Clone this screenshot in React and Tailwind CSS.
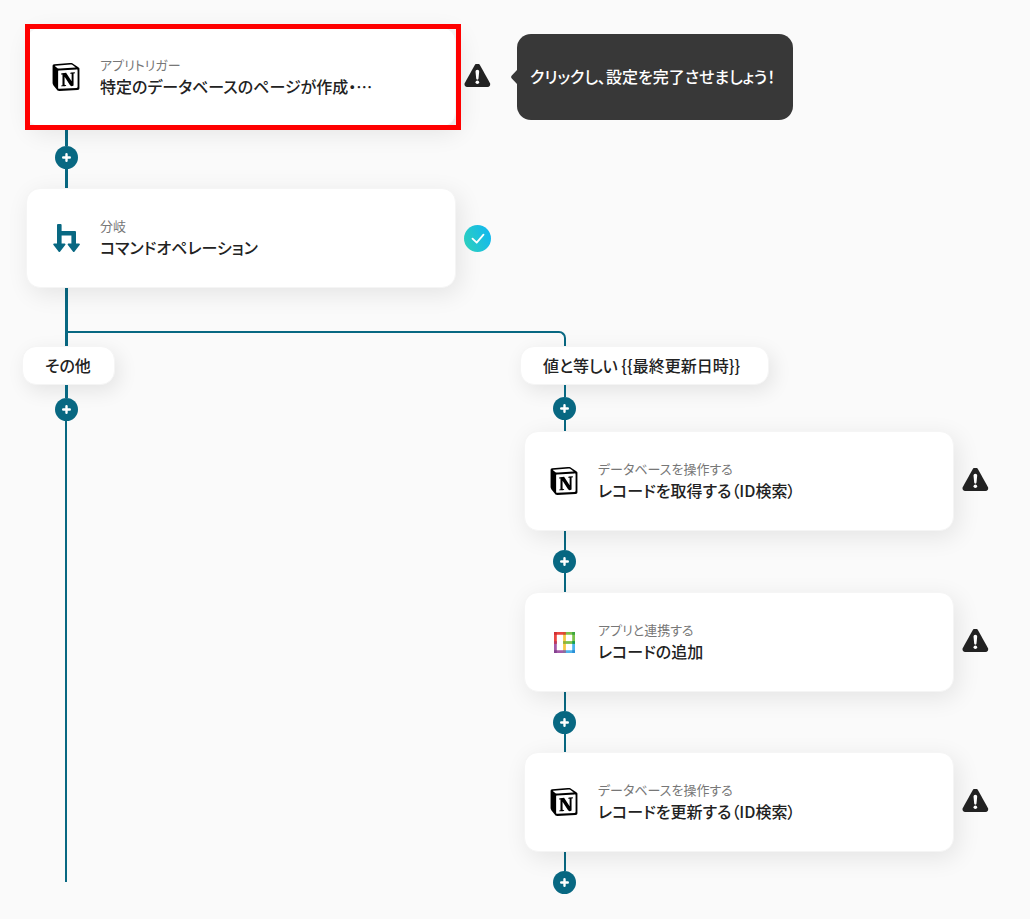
import React from "react";
import { SiNotion } from "react-icons/si";

function WarningIcon() {
  return (
    <svg width="27" height="27" viewBox="0 1 27 27" role="img" aria-label="未設定" className="shrink-0">
      <path
        d="M10.8 1.9a3 3 0 0 1 5.1 0l10 18.2a2.7 2.7 0 0 1-2.4 3.9H3.2a2.7 2.7 0 0 1-2.4-3.9z"
        fill="#222222"
      />
      <path d="M11.5 8.6a1.85 1.85 0 0 1 3.7 0l-.7 7a1.15 1.15 0 0 1-2.3 0z" fill="#fff" />
      <circle cx="13.35" cy="19.3" r="1.8" fill="#fff" />
    </svg>
  );
}

function DoneIcon() {
  return (
    <svg width="27" height="27" viewBox="0 0 27 27" role="img" aria-label="設定済み" className="shrink-0">
      <defs>
        <linearGradient id="done" x1="0" y1="0.75" x2="1" y2="0.35">
          <stop offset="0" stopColor="#2dd0bd" />
          <stop offset="1" stopColor="#12b8ee" />
        </linearGradient>
      </defs>
      <circle cx="13.5" cy="13.5" r="13.5" fill="url(#done)" />
      <path d="M8.5 13.6l4.2 4.1 6.8-8" fill="none" stroke="#fff" strokeWidth="1.8" strokeLinecap="round" strokeLinejoin="round" />
    </svg>
  );
}

function BranchIcon() {
  return (
    <svg width="27" height="28" viewBox="0 0 27 28" fill="#086882" aria-hidden="true">
      <path d="M4 1a1 1 0 0 1 1-1h2.6a1 1 0 0 1 1 1v6H22a1 1 0 0 1 1 1v12h-4.6v-8.6H8.6V20H4z" />
      <path d="M1 19.6h10.6a.8.8 0 0 1 .6 1.4l-5 6.4a1.1 1.1 0 0 1-1.7 0l-5-6.4a.8.8 0 0 1 .5-1.4z" />
      <path d="M15.4 19.6H26a.8.8 0 0 1 .6 1.4l-5 6.4a1.1 1.1 0 0 1-1.7 0l-5-6.4a.8.8 0 0 1 .5-1.4z" />
    </svg>
  );
}

function GridIcon() {
  return (
    <svg width="21" height="21" viewBox="0 0 21 21" aria-hidden="true">
      <g fill="none" strokeWidth="2.8">
        <path d="M1.4 11V1.4H11" stroke="#ea4640" />
        <path d="M10.5 1.4h9.1v9.1" stroke="#7dc24b" />
        <path d="M1.4 10.5v9.1h9.1" stroke="#a45aa8" />
        <path d="M10.5 19.6h9.1v-9.1" stroke="#4db4ec" />
        <path d="M10.5 2.6v15.8" stroke="#f6c944" />
        <path d="M11.8 10.5h6.6" stroke="#7dc24b" />
      </g>
      <path d="M0 0h2.8v2.8H0z" fill="#cf2f34" />
      <path d="M9.1 0h2.8v2.8H9.1z" fill="#d5512c" />
      <path d="M18.2 0H21v2.8h-2.8z" fill="#3aa63f" />
      <path d="M0 9.1h2.8v2.8H0z" fill="#c03a5c" />
      <path d="M9.1 9.1h2.8v2.8H9.1z" fill="#8fb035" />
      <path d="M18.2 9.1H21v2.8h-2.8z" fill="#15a04d" />
      <path d="M0 18.2h2.8V21H0z" fill="#84408f" />
      <path d="M9.1 18.2h2.8V21H9.1z" fill="#8a6f9c" />
      <path d="M18.2 18.2H21V21h-2.8z" fill="#2b8fd6" />
    </svg>
  );
}

const icons = {
  notion: <SiNotion size={28} color="#000" aria-hidden="true" />,
  branch: <BranchIcon />,
  grid: <GridIcon />,
};

function Step({ icon, kind, title, done, highlighted, hint }) {
  return (
    <div className="ml-1 flex items-center">
      <div className="relative">
        <button
          type="button"
          className="flex h-[100px] w-[430px] items-center rounded-[14px] border border-[#f5f5f5] bg-white pl-[25px] text-left shadow-[4px_6px_24px_rgba(0,0,0,0.09)]"
        >
          <span className="mr-5 flex w-7 items-center justify-center">{icons[icon]}</span>
          <span className="flex flex-col pb-0.5">
            <span className="text-[13px] leading-5 font-normal text-[#777777]">{kind}</span>
            <span className="text-[16px] leading-[22px] font-medium text-[#222222]">{title}</span>
          </span>
        </button>
        {highlighted && (
          <div className="pointer-events-none absolute -top-[3px] -right-[5px] -bottom-[3px] -left-px border-[5px] border-[#ff0000]" />
        )}
      </div>
      <div className="relative ml-2">{done ? <DoneIcon /> : <WarningIcon />}</div>
      {hint && (
        <div role="tooltip" className="ml-5 flex items-center">
          <svg width="6" height="14" viewBox="0 0 6 14" aria-hidden="true">
            <path d="M6 0v14L.8 8.4a2 2 0 0 1 0-2.8z" fill="#383838" />
          </svg>
          <p className="flex h-[86px] w-[276px] items-center rounded-[14px] bg-[#383838] px-[13px] pb-0.5 text-[16px] font-medium whitespace-nowrap text-white">
            {hint}
          </p>
        </div>
      )}
    </div>
  );
}

function AddButton() {
  return (
    <button
      type="button"
      aria-label="ステップを追加"
      className="ml-[33px] flex size-[23px] items-center justify-center rounded-full bg-[#086882]"
    >
      <svg width="9" height="9" viewBox="0 0 9 9" aria-hidden="true">
        <path d="M4.5 1.2v6.6M1.2 4.5h6.6" stroke="#fff" strokeWidth="2.4" strokeLinecap="round" />
      </svg>
    </button>
  );
}

function TrunkLine({ className }) {
  return <div className={`ml-[43px] w-[3px] bg-[#086882] ${className}`} />;
}

function BranchLine({ className }) {
  return <div className={`ml-11 w-0.5 bg-[#086882] ${className}`} />;
}

function BranchLabel({ className, children }) {
  return (
    <div
      className={`flex h-[39px] w-fit items-center rounded-[14px] border border-[#f5f5f5] bg-white px-[22px] pb-0.5 text-[16px] font-medium whitespace-nowrap text-[#222222] shadow-[4px_6px_20px_rgba(0,0,0,0.09)] ${className}`}
    >
      {children}
    </div>
  );
}

const records = [
  { icon: "notion", kind: "データベースを操作する", title: "レコードを取得する（ID検索）" },
  { icon: "grid", kind: "アプリと連携する", title: "レコードの追加" },
  { icon: "notion", kind: "データベースを操作する", title: "レコードを更新する（ID検索）" },
];

export default function App() {
  return (
    <main className="min-h-screen overflow-hidden bg-[#fafafa] pt-[27px] pb-6 pl-[22px] font-['Noto_Sans_CJK_JP',sans-serif] [font-feature-settings:'palt']">
      <Step
        icon="notion"
        kind="アプリトリガー"
        title="特定のデータベースのページが作成・…"
        highlighted
        hint="クリックし、設定を完了させましょう！"
      />
      <TrunkLine className="h-[19px]" />
      <AddButton />
      <TrunkLine className="h-[19px]" />
      <Step icon="branch" kind="分岐" title="コマンドオペレーション" done />

      <div className="flex h-[58px] items-end">
        <TrunkLine className="h-full shrink-0" />
        <div className="h-[15px] w-[498px] shrink-0 rounded-tr-[7px] border-t-2 border-r-2 border-[#086882]" />
      </div>

      <div className="flex">
        <section className="flex w-[498px] shrink-0 flex-col">
          <BranchLabel className="min-w-[93px]">その他</BranchLabel>
          <TrunkLine className="h-[13px]" />
          <AddButton />
          <div className="mb-3 ml-[43px] w-0.5 grow bg-[#086882]" />
        </section>

        <section className="flex flex-col">
          <BranchLabel className="min-w-[249px]">{"値と等しい {{最終更新日時}}"}</BranchLabel>
          <BranchLine className="h-3" />
          <AddButton />
          <BranchLine className="h-[11px]" />
          {records.map((step, i) => (
            <React.Fragment key={step.title}>
              <Step {...step} />
              <BranchLine className="h-[19px]" />
              <AddButton />
              {i < records.length - 1 && <BranchLine className={i === 0 ? "h-[19px]" : "h-[18px]"} />}
            </React.Fragment>
          ))}
        </section>
      </div>
    </main>
  );
}
